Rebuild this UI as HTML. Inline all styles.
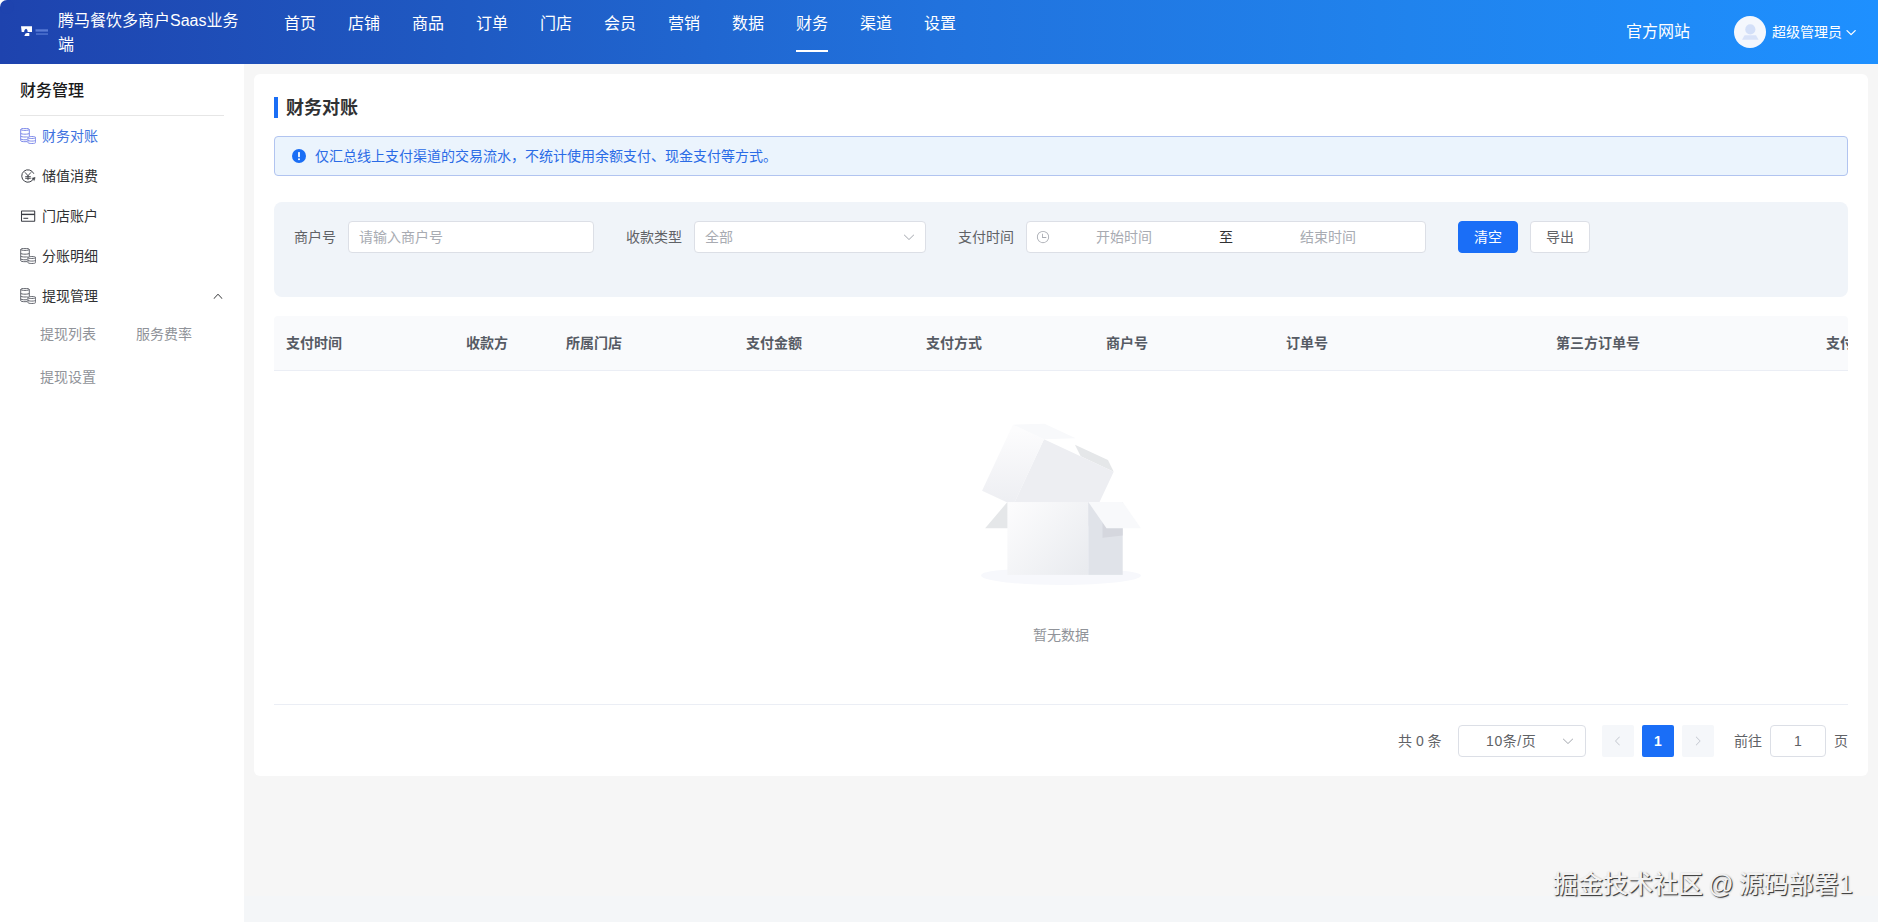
<!DOCTYPE html>
<html lang="zh-CN">
<head>
<meta charset="utf-8">
<title>财务对账</title>
<style>
*{box-sizing:border-box;margin:0;padding:0}
html,body{width:1878px;height:922px;overflow:hidden;background:#f6f6f6}
body{font-family:"Liberation Sans","Noto Sans CJK SC",sans-serif;font-size:14px;color:#303133;position:relative}
.abs{position:absolute}
/* header */
#hd{position:absolute;left:0;top:0;width:1878px;height:64px;background:linear-gradient(90deg,#1e43ae 0%,#1f5ac3 25%,#2172dd 50%,#2083ed 75%,#1e90ff 100%)}
#corner{position:absolute;left:0;top:0;width:7px;height:7px;background:#fff}
#corner i{position:absolute;left:0;top:0;width:14px;height:14px;border-radius:7px;background:#1e43ae}
#brand{position:absolute;left:58px;top:9px;width:186px;white-space:nowrap;font-size:16px;line-height:23.5px;color:#fff}
.nav{position:absolute;top:0;height:48px;line-height:48px;font-size:16px;color:#fff;width:32px;white-space:nowrap}
#uline{position:absolute;left:796px;top:50px;width:32px;height:2px;background:#fff}
/* sidebar */
#sb{position:absolute;left:0;top:64px;width:244px;height:858px;background:#fff}
#sbt{position:absolute;left:20px;top:15px;font-size:16px;line-height:24px;font-weight:500;color:#1a1a1a}
#sbl{position:absolute;left:20px;top:51px;width:204px;height:1px;background:#e6e6e6}
.mi{position:absolute;left:42px;font-size:14px;line-height:20px;color:#303133;white-space:nowrap}
.mi.on{color:#4073e0}
.sm{position:absolute;font-size:14px;line-height:20px;color:#909399;white-space:nowrap}
/* card */
#card{position:absolute;left:254px;top:74px;width:1614px;height:702px;background:#fff;border-radius:6px}

#ttl{position:absolute;left:32px;top:20px;font-size:18px;line-height:28px;font-weight:700;color:#303133}
#tbar{position:absolute;left:20px;top:23px;width:4px;height:21px;background:#1a6ef5}
#alert{position:absolute;left:20px;top:62px;width:1574px;height:40px;border:1px solid #b1c4f0;border-radius:4px;background:#ebf4fd}
#alert .ic{position:absolute;left:17px;top:12px;width:14px;height:14px}
#alert .tx{position:absolute;left:40px;top:9px;font-size:14px;line-height:20px;color:#2a6be6;white-space:nowrap}
#flt{position:absolute;left:20px;top:128px;width:1574px;height:95px;background:#f0f4f9;border-radius:8px}
.lb{position:absolute;top:25px;font-size:14px;line-height:20px;color:#606266;white-space:nowrap}
.inp{position:absolute;top:19px;height:32px;background:#fff;border:1px solid #dcdfe6;border-radius:4px}
.ph{position:absolute;top:5px;font-size:14px;line-height:20px;color:#a8abb2;white-space:nowrap}
.btn{position:absolute;top:19px;width:60px;height:32px;border-radius:4px;font-size:14px;line-height:30px;text-align:center;border:1px solid #dcdfe6;background:#fff;color:#606266}
.btn.pr{background:#1a6ef7;border-color:#1a6ef7;color:#fff}
#th{position:absolute;left:20px;top:242px;width:1574px;height:54px;background:#f9fafc;border-radius:4px 4px 0 0;overflow:hidden}
#thb{position:absolute;left:20px;top:296px;width:1574px;height:1px;background:#ebeef5}
#th span{position:absolute;top:17px;font-size:14px;line-height:20px;font-weight:700;color:#565b64;white-space:nowrap}
#emp{position:absolute;left:727px;top:337px;width:160px;height:174px}
#empt{position:absolute;left:20px;top:531px;width:1574px;text-align:center;font-size:14px;line-height:60px;color:#909399}
#tbb{position:absolute;left:20px;top:630px;width:1574px;height:1px;background:#ebeef5}
.pg{position:absolute;top:651px;height:32px;font-size:14px;line-height:32px;color:#606266;white-space:nowrap}
.pbtn{position:absolute;top:651px;width:32px;height:32px;border-radius:2px;background:#f5f7fa}

#site{position:absolute;left:1626px;top:20px;font-size:16px;line-height:24px;color:#fff;white-space:nowrap}
#ava{position:absolute;left:1734px;top:16px;width:32px;height:32px;border-radius:50%;background:#f4f7fd;overflow:hidden}
#uname{position:absolute;left:1772px;top:22px;font-size:14px;line-height:20px;color:#fff;white-space:nowrap}
#wm{position:absolute;left:1553px;top:867px;font-size:25px;font-weight:500;line-height:34px;color:#f2f2f2;white-space:nowrap;text-shadow:1px 1px 0 rgba(40,40,40,.8),1px 1px 2px rgba(0,0,0,.45);word-spacing:-1.7px}
.ico{position:absolute;left:20px;width:16px;height:16px}
</style>
</head>
<body>
<div id="hd">
  <div id="corner"><i></i></div>
  <div id="brand">腾马餐饮多商户Saas业务<br>端</div>
  <div class="nav" style="left:284px">首页</div>
  <div class="nav" style="left:348px">店铺</div>
  <div class="nav" style="left:412px">商品</div>
  <div class="nav" style="left:476px">订单</div>
  <div class="nav" style="left:540px">门店</div>
  <div class="nav" style="left:604px">会员</div>
  <div class="nav" style="left:668px">营销</div>
  <div class="nav" style="left:732px">数据</div>
  <div class="nav" style="left:796px">财务</div>
  <div class="nav" style="left:860px">渠道</div>
  <div class="nav" style="left:924px">设置</div>
  <svg id="logo" style="position:absolute;left:20px;top:25px" width="30" height="12" viewBox="0 0 30 12">
    <path fill="#fff" d="M1 1.200h11v5.800H7.600c.2-1.700-.4-2.700-1.500-3.300-1.300.4-2 1.700-1.900 3.300H1.700z"/>
    <path fill="#fff" d="M4.300 11l1.200-2.400c1.100-.5 2.400-.6 3.800-.6v3z"/>
    <rect x="15.500" y="4.300" width="12.500" height="2.300" fill="#7f9fee" opacity=".6"/>
    <rect x="16" y="8.200" width="12" height="1.700" fill="#7f9fee" opacity=".45"/>
  </svg>
  <div id="site">官方网站</div>
  <div id="ava"><svg width="32" height="32" viewBox="0 0 32 32"><circle cx="16.300" cy="13.400" r="5.100" fill="#d3dff8"/><path d="M8 23.800l2.600-4.600h11.400l2.600 4.600z" fill="#d8e2f8"/></svg></div>
  <div id="uname">超级管理员</div>
  <svg style="position:absolute;left:1845px;top:29px" width="12" height="8" viewBox="0 0 12 8"><path d="M2 1.600l4.100 4 4.100-4" fill="none" stroke="#fff" stroke-width="1.300" stroke-linecap="round" stroke-linejoin="round"/></svg>
  <div id="uline"></div>
</div>
<div id="sb">
  <div id="sbt">财务管理</div>
  <div id="sbl"></div>
  <svg class="ico" style="top:64px" viewBox="0 0 16 16" fill="none" stroke="#7f8bea" stroke-width="1"><path d="M.7 1.400c0-.6 1.900-1 4.300-1s4.300.4 4.300 1c0 .6-1.900 1-4.300 1s-4.300-.4-4.300-1zM.7 1.400v11.300c0 .6 1.900 1 4.300 1 .8 0 1.500 0 2.100-.1M9.300 1.400v6.700M.7 5.200c0 .6 1.900 1 4.300 1s4.300-.4 4.300-1M.7 8c0 .6 1.900 1 4.300 1 1 0 1.900-.1 2.600-.2M.7 10.800c0 .6 1.900 1 4.300 1 .8 0 1.500 0 2.200-.1"/><path d="M7.900 9.500c0-.6 1.700-1 3.900-1s3.900.4 3.900 1v5c0 .6-1.700 1-3.900 1s-3.900-.4-3.900-1zM7.900 9.500c0 .6 1.700 1 3.900 1s3.900-.4 3.900-1M7.900 12.100c0 .6 1.700 1 3.900 1s3.900-.4 3.900-1"/></svg>
  <svg class="ico" style="top:104px" viewBox="0 0 16 16" fill="none" stroke="#3d4047" stroke-width="1" stroke-linecap="round" stroke-linejoin="round"><path d="M13.660 5.360A6.250 6.250 0 1 0 13.870 10.140"/><path d="M12.100 10.200l3-.8-.7 2.900z" fill="#3d4047" stroke-width=".5"/><path d="M5.200 4.600L8 7.700l2.800-3.100M8 7.700v4M5.600 8.700h4.800M5.600 10.300h4.800" stroke-width=".95"/></svg>
  <svg class="ico" style="top:144px" viewBox="0 0 16 16" fill="none" stroke="#3a3d44" stroke-width="1.300"><rect x="1.500" y="3" width="13.200" height="10.200" rx=".3" stroke-width="1.050"/><path d="M1.500 6.400h13.200" stroke-width="1.400"/><path d="M3.400 10.300h4.800" stroke-width="1.050"/></svg>
  <svg class="ico" style="top:184px" viewBox="0 0 16 16" fill="none" stroke="#5d6068" stroke-width=".95"><path d="M.7 1.400c0-.6 1.900-1 4.300-1s4.300.4 4.300 1c0 .6-1.900 1-4.300 1s-4.300-.4-4.300-1zM.7 1.400v11.300c0 .6 1.900 1 4.300 1 .8 0 1.500 0 2.100-.1M9.300 1.400v6.700M.7 5.200c0 .6 1.900 1 4.300 1s4.300-.4 4.300-1M.7 8c0 .6 1.900 1 4.300 1 1 0 1.900-.1 2.600-.2M.7 10.800c0 .6 1.900 1 4.300 1 .8 0 1.500 0 2.200-.1"/><path d="M7.900 9.500c0-.6 1.700-1 3.900-1s3.900.4 3.900 1v5c0 .6-1.700 1-3.900 1s-3.900-.4-3.900-1zM7.900 9.500c0 .6 1.700 1 3.900 1s3.900-.4 3.900-1M7.900 12.100c0 .6 1.700 1 3.900 1s3.900-.4 3.900-1"/></svg>
  <svg class="ico" style="top:224px" viewBox="0 0 16 16" fill="none" stroke="#5d6068" stroke-width=".95"><path d="M.7 1.400c0-.6 1.900-1 4.300-1s4.300.4 4.300 1c0 .6-1.900 1-4.300 1s-4.300-.4-4.300-1zM.7 1.400v11.300c0 .6 1.900 1 4.300 1 .8 0 1.500 0 2.100-.1M9.300 1.400v6.700M.7 5.200c0 .6 1.900 1 4.300 1s4.300-.4 4.300-1M.7 8c0 .6 1.900 1 4.300 1 1 0 1.900-.1 2.600-.2M.7 10.800c0 .6 1.900 1 4.300 1 .8 0 1.500 0 2.200-.1"/><path d="M7.900 9.500c0-.6 1.700-1 3.900-1s3.900.4 3.900 1v5c0 .6-1.700 1-3.900 1s-3.900-.4-3.900-1zM7.900 9.500c0 .6 1.700 1 3.900 1s3.900-.4 3.900-1M7.900 12.100c0 .6 1.700 1 3.900 1s3.900-.4 3.900-1"/></svg>
  <svg style="position:absolute;left:212px;top:226px" width="12" height="12" viewBox="0 0 1024 1024"><path fill="#303133" d="M488.832 344.320l-339.840 356.672a32 32 0 0 0 0 44.160l.384.384a29.440 29.440 0 0 0 42.688 0l320-335.872 319.872 335.872a29.440 29.440 0 0 0 42.688 0l.384-.384a32 32 0 0 0 0-44.160L535.168 344.320a32 32 0 0 0-46.336 0z"/></svg>
  <div class="mi on" style="top:62px">财务对账</div>
  <div class="mi" style="top:102px">储值消费</div>
  <div class="mi" style="top:142px">门店账户</div>
  <div class="mi" style="top:182px">分账明细</div>
  <div class="mi" style="top:222px">提现管理</div>
  <div class="sm" style="left:40px;top:260px">提现列表</div>
  <div class="sm" style="left:136px;top:260px">服务费率</div>
  <div class="sm" style="left:40px;top:303px">提现设置</div>
</div>
<div id="card">
  <div id="tbar"></div>
  <div id="ttl">财务对账</div>
  <div id="alert">
    <svg class="ic" viewBox="0 0 14 14"><circle cx="7" cy="7" r="7" fill="#1a6ef5"/><rect x="6.1" y="3" width="1.8" height="5.2" rx=".6" fill="#fff"/><circle cx="7" cy="10.2" r="1" fill="#fff"/></svg>
    <div class="tx">仅汇总线上支付渠道的交易流水，不统计使用余额支付、现金支付等方式。</div>
  </div>
  <div id="flt">
    <div class="lb" style="left:20px">商户号</div>
    <div class="inp" style="left:74px;width:246px"><div class="ph" style="left:10px">请输入商户号</div></div>
    <div class="lb" style="left:352px">收款类型</div>
    <div class="inp" style="left:420px;width:232px"><div class="ph" style="left:10px">全部</div>
      <svg style="position:absolute;left:207px;top:8px" width="14" height="14" viewBox="0 0 1024 1024"><path fill="#a8abb2" d="M831.872 340.864 512 652.672 192.128 340.864a30.592 30.592 0 0 0-42.752 0 29.120 29.120 0 0 0 0 41.600L489.664 714.240a32 32 0 0 0 44.672 0l340.288-331.712a29.120 29.120 0 0 0 0-41.728 30.592 30.592 0 0 0-42.752 0z"/></svg>
    </div>
    <div class="lb" style="left:684px">支付时间</div>
    <div class="inp" style="left:752px;width:400px">
      <svg style="position:absolute;left:9px;top:8px" width="14" height="14" viewBox="0 0 1024 1024"><path fill="#a8abb2" d="M512 896a384 384 0 1 0 0-768 384 384 0 0 0 0 768m0 64a448 448 0 1 1 0-896 448 448 0 0 1 0 896"/><path fill="#a8abb2" d="M480 256a32 32 0 0 1 32 32v256a32 32 0 0 1-64 0V288a32 32 0 0 1 32-32"/><path fill="#a8abb2" d="M480 512h256q32 0 32 32t-32 32H480q-32 0-32-32t32-32"/></svg>
      <div class="ph" style="left:69px">开始时间</div>
      <div class="ph" style="left:192px;color:#303133">至</div>
      <div class="ph" style="left:273px">结束时间</div>
    </div>
    <div class="btn pr" style="left:1184px">清空</div>
    <div class="btn" style="left:1256px">导出</div>
  </div>
  <div id="th">
    <span style="left:12px">支付时间</span>
    <span style="left:192px">收款方</span>
    <span style="left:292px">所属门店</span>
    <span style="left:472px">支付金额</span>
    <span style="left:652px">支付方式</span>
    <span style="left:832px">商户号</span>
    <span style="left:1012px">订单号</span>
    <span style="left:1282px">第三方订单号</span>
    <span style="left:1552px">支付状态</span>
  </div>
  <div id="thb"></div>
  <div id="emp"><svg width="160" height="174" viewBox="0 0 79 86">
  <defs>
    <linearGradient id="lg1" x1="38.8503086%" y1="0%" x2="61.1496914%" y2="100%"><stop stop-color="#fcfcfd" offset="0%"/><stop stop-color="#eeeff3" offset="100%"/></linearGradient>
    <linearGradient id="lg2" x1="0%" y1="9.5%" x2="100%" y2="90.5%"><stop stop-color="#fcfcfd" offset="0%"/><stop stop-color="#e9ebef" offset="100%"/></linearGradient>
        <mask id="m4"><rect x="0" y="0" width="17" height="36" fill="#fff"/></mask>
  </defs>
  <g stroke="none" stroke-width="1" fill="none" fill-rule="evenodd">
    <path d="M39.5,86 C61.3152476,86 79,83.9106622 79,81.3333333 C79,78.7560045 57.3152476,78 35.5,78 C13.6847524,78 0,78.7560045 0,81.3333333 C0,83.9106622 17.6847524,86 39.5,86 Z" fill="#f7f8fc"/>
    <polygon fill="#e5e7e9" transform="translate(27.500000, 51.500000) scale(1, -1) translate(-27.500000, -51.500000)" points="13 58 53 58 42 45 2 45"/>
    <g transform="translate(34.500000, 31.500000) scale(-1, 1) rotate(-25.000000) translate(-34.500000, -31.500000) translate(7.000000, 10.000000)">
      <polygon fill="#e5e7e9" transform="translate(11.500000, 5.000000) scale(1, -1) translate(-11.500000, -5.000000)" points="2.84078316e-14 3 18 3 23 7 5 7"/>
      <polygon fill="#edeef2" points="-3.69149156e-15 7 38 7 38 43 -3.69149156e-15 43"/>
      <rect fill="url(#lg1)" transform="translate(46.500000, 25.000000) scale(-1, 1) translate(-46.500000, -25.000000)" x="38" y="7" width="17" height="36"/>
      <polygon fill="#f8f9fb" transform="translate(39.500000, 3.500000) scale(-1, 1) translate(-39.500000, -3.500000)" points="24 7 41 7 55 -3.63806207e-12 38 -3.63806207e-12"/>
    </g>
    <rect fill="url(#lg2)" x="13" y="45" width="40" height="36"/>
    <g transform="translate(53.000000, 45.000000)">
      <rect fill="#e0e3e9" x="0" y="0" width="17" height="36"/>
      <polygon fill="#d5d7de" mask="url(#m4)" transform="translate(12.000000, 9.000000) scale(-1, 1) translate(-12.000000, -9.000000)" points="7 0 24 0 20 18 7 16.5"/>
    </g>
    <polygon fill="#f8f9fb" transform="translate(66.000000, 51.500000) scale(-1, 1) translate(-66.000000, -51.500000)" points="62 45 79 45 70 58 53 58"/>
  </g>
</svg></div>
  <div id="empt">暂无数据</div>
  <div id="tbb"></div>
  <div class="pg" style="left:1144px">共 0 条</div>
  <div class="inp" style="left:1204px;top:651px;width:128px"><div class="ph" style="left:27px;color:#606266;letter-spacing:.6px">10条/页</div>
    <svg style="position:absolute;left:102px;top:8px" width="14" height="14" viewBox="0 0 1024 1024"><path fill="#a8abb2" d="M831.872 340.864 512 652.672 192.128 340.864a30.592 30.592 0 0 0-42.752 0 29.120 29.120 0 0 0 0 41.600L489.664 714.240a32 32 0 0 0 44.672 0l340.288-331.712a29.120 29.120 0 0 0 0-41.728 30.592 30.592 0 0 0-42.752 0z"/></svg>
  </div>
  <div class="pbtn" style="left:1348px"><svg style="position:absolute;left:10px;top:10px" width="12" height="12" viewBox="0 0 1024 1024"><path fill="#c0c4cc" d="M609.408 149.376 277.760 489.600a32 32 0 0 0 0 44.672l331.648 340.352a29.120 29.120 0 0 0 41.728 0 30.592 30.592 0 0 0 0-42.752L339.264 511.936l311.872-319.872a30.592 30.592 0 0 0 0-42.688 29.120 29.120 0 0 0-41.728 0z"/></svg></div>
  <div class="pbtn" style="left:1388px;background:#1a6ef7;color:#fff;font-weight:700;font-size:14px;line-height:32px;text-align:center">1</div>
  <div class="pbtn" style="left:1428px"><svg style="position:absolute;left:10px;top:10px" width="12" height="12" viewBox="0 0 1024 1024"><path fill="#c0c4cc" d="M340.864 149.312a30.592 30.592 0 0 0 0 42.752L652.736 512 340.864 831.872a30.592 30.592 0 0 0 0 42.752 29.120 29.120 0 0 0 41.728 0L714.240 534.336a32 32 0 0 0 0-44.672L382.592 149.376a29.120 29.120 0 0 0-41.728 0z"/></svg></div>
  <div class="pg" style="left:1480px">前往</div>
  <div class="inp" style="left:1516px;top:651px;width:56px"><div class="ph" style="left:0;width:54px;text-align:center;color:#606266">1</div></div>
  <div class="pg" style="left:1580px">页</div>
</div>
<div style="position:absolute;left:244px;top:896px;width:1634px;height:26px;background:#f4f6f8"></div>
<div id="wm">掘金技术社区 @ 源码部署1</div>
</body>
</html>
